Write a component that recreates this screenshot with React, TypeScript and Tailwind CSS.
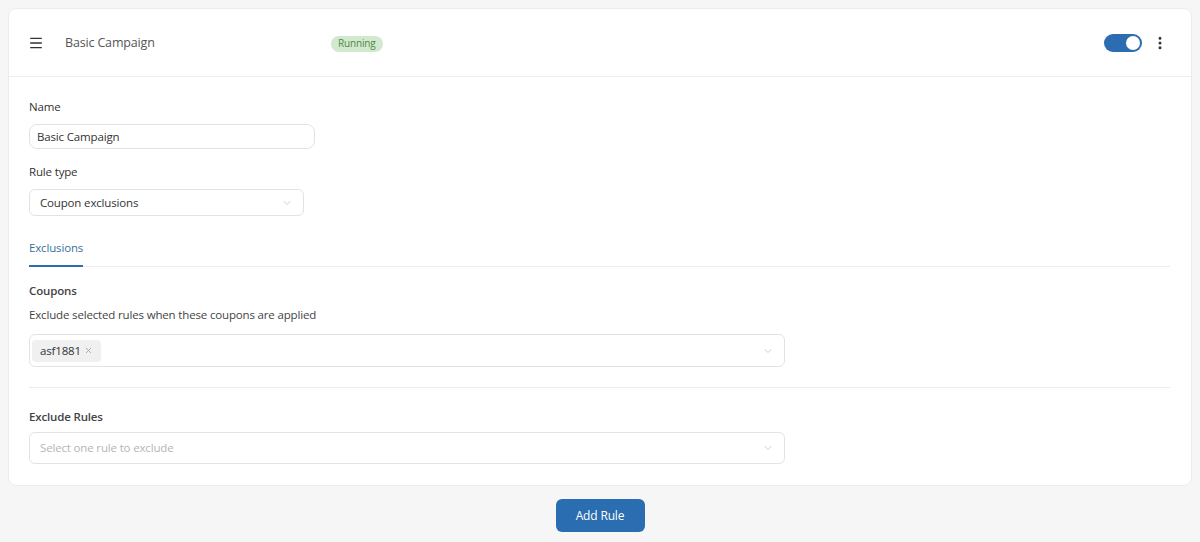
import { ChevronDown, Menu, MoreVertical, X } from 'lucide-react'

function Select({ value, placeholder, width }: { value?: string; placeholder?: string; width: string }) {
  return (
    <div className={`${width} flex items-center justify-between border border-[#e3e3e3] rounded-md px-[10px]`}>
      <span className={value ? 'text-[11.5px] text-[#333]' : 'text-[11.5px] text-[#b5b5b5]'}>{value ?? placeholder}</span>
      <ChevronDown className="w-3 h-3 text-[#bbb]" strokeWidth={1.5} />
    </div>
  )
}

export default function App() {
  return (
    <div
      className="min-h-[542px] bg-[#f6f6f6] pt-2 px-2 tracking-[-0.01em]"
      style={{ fontFamily: '"Open Sans", "Noto Sans", sans-serif' }}
    >
      <div className="bg-white border border-[#ececec] rounded-lg">
        <div className="h-[68px] flex items-center pl-[19px] pr-[23px] border-b border-[#eeeeee]">
          <Menu className="w-[16px] h-[16px] text-[#333]" strokeWidth={2} />
          <span className="ml-[21px] pt-[2px] text-[12.5px] text-[#555] w-[266px]">Basic Campaign</span>
          <span className="px-[7px] h-[16px] mt-[2px] flex items-center rounded-full bg-[#d2e8cf] text-[10px] text-[#4f8a46]">
            Running
          </span>
          <div className="ml-auto flex items-center gap-[10px]">
            <div className="w-[38px] h-[18px] rounded-full bg-[#2b6db0] flex items-center justify-end px-[2px]">
              <div className="w-[14px] h-[14px] rounded-full bg-white" />
            </div>
            <MoreVertical className="w-4 h-4 text-[#333]" strokeWidth={2.5} />
          </div>
        </div>

        <div className="pl-5 pr-[21px] pt-[22px] pb-[21px] text-[11.5px]">
          <div className="text-[#333] leading-[16px]">Name</div>
          <div className="mt-[9px] w-[286px] h-[25px] flex items-center border border-[#e3e3e3] rounded-lg px-[7px] text-[#333]">
            Basic Campaign
          </div>

          <div className="mt-[15px] text-[#333] leading-[16px]">Rule type</div>
          <div className="mt-[9px]">
            <Select value="Coupon exclusions" width="w-[275px] h-[27px]" />
          </div>

          <div className="mt-[24px] border-b border-[#ececec] flex">
            <div className="text-[#3a6f9c] pb-[9px] border-b-2 border-[#2b6db0] -mb-px leading-[16px]">
              Exclusions
            </div>
          </div>

          <div className="mt-[16px] font-semibold text-[#444] leading-[16px]">Coupons</div>
          <div className="mt-[8px] text-[#444] leading-[16px]">
            Exclude selected rules when these coupons are applied
          </div>
          <div className="mt-[11px] w-[756px] h-[33px] flex items-center justify-between border border-[#e3e3e3] rounded-md pl-[2px] pr-[10px]">
            <span className="h-[22px] flex items-center gap-[3px] bg-[#f0f0f0] rounded px-[8px] text-[#333]">
              asf1881
              <X className="w-[9px] h-[9px] text-[#999]" strokeWidth={2} />
            </span>
            <ChevronDown className="w-3 h-3 text-[#bbb]" strokeWidth={1.5} />
          </div>

          <div className="mt-[20px] border-t border-[#ececec]" />

          <div className="mt-[21px] font-semibold text-[#444] leading-[16px]">Exclude Rules</div>
          <div className="mt-[7px]">
            <Select placeholder="Select one rule to exclude" width="w-[756px] h-[32px]" />
          </div>
        </div>
      </div>

      <div className="flex justify-center mt-[13px]">
        <button className="w-[89px] h-[33px] rounded-md bg-[#2a6db0] text-white text-[12px] font-medium">
          Add Rule
        </button>
      </div>
    </div>
  )
}
